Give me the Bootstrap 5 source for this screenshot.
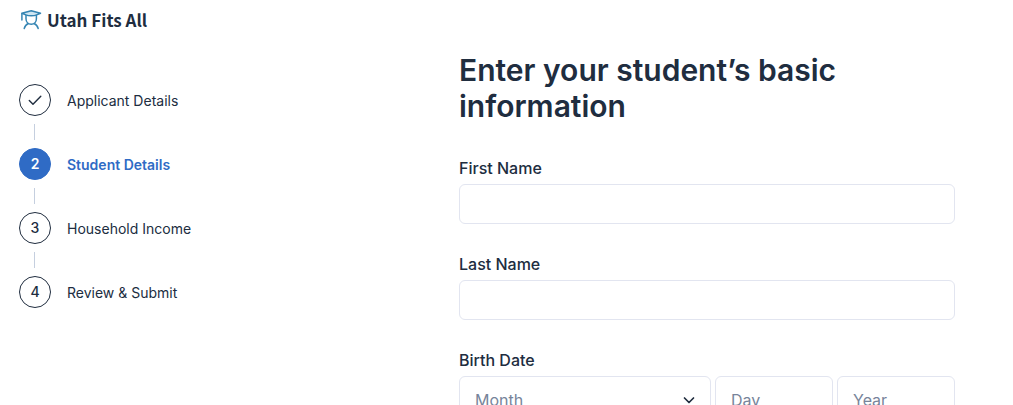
<!DOCTYPE html>
<html lang="en">
<head>
<meta charset="utf-8">
<meta name="viewport" content="width=device-width, initial-scale=1">
<title>Utah Fits All – Student Details</title>
<link href="https://cdn.jsdelivr.net/npm/bootstrap@5.3.0/dist/css/bootstrap.min.css" rel="stylesheet">
<style>
  :root { --ink: #202d3f; --brand: #2f6bc5; --line: #e2e5f0; --hint: #77849a; }
  body { font-family: Inter, "Liberation Sans", sans-serif; color: var(--ink); background: #fff; }
  .sidebar { width: 401px; padding: 8px 19px; }
  .brand { font-family: "Noto Sans CJK SC", sans-serif; font-size: 17px; font-weight: 700; line-height: 24px; color: var(--ink); gap: 4px; }
  .steps { margin-top: 52px; }
  .step { height: 64px; font-size: 14px; }
  .step a { color: inherit; height: 32px; line-height: 32px; gap: 16px; }
  .step:not(:last-child)::after { content: ""; display: block; width: 1px; height: 16px; margin: 8px 15px; background: #c5cfdf; }
  .step-dot { width: 32px; height: 32px; border: 1px solid var(--ink); font-weight: 500; }
  .step-label { padding-top: 1px; }
  .step.active { color: var(--brand); font-weight: 600; }
  .step.active .step-dot { background: var(--brand); border-color: var(--brand); color: #fff; font-weight: 600; }
  .student-form { max-width: 496px; padding-top: 52px; }
  .student-form h1 { font-size: 30px; font-weight: 600; line-height: 36px; margin-bottom: 32px; }
  .field { margin-bottom: 28px; }
  .field-label { display: block; font-size: 16px; font-weight: 500; line-height: 24px; margin-bottom: 4px; }
  .form-control, .form-select { height: 40px; border-color: var(--line); border-radius: 6px; padding: 8px 15px; font-size: 16px; line-height: 24px; color: var(--ink); }
  .form-control::placeholder, .form-select { color: var(--hint); }
  .form-select { background-image: url("data:image/svg+xml,%3csvg xmlns='http://www.w3.org/2000/svg' viewBox='0 0 12 12'%3e%3cpath fill='none' stroke='%23202d3f' stroke-width='1.7' stroke-linecap='round' stroke-linejoin='round' d='M1.5 4 6 8.500 10.500 4'/%3e%3c/svg%3e"); background-size: 12px 12px; background-position: right 15px center; }
  .birth { display: grid; grid-template-columns: 252fr 118fr 118fr; gap: 4px; }
  .birth > * { height: 48px; }
</style>
</head>
<body>
<div class="d-flex">
  <aside class="sidebar flex-shrink-0">
    <a href="#" class="brand d-flex align-items-center text-decoration-none">
      <svg width="24" height="24" viewBox="0 0 24 24" fill="none" stroke="#3585b3" stroke-width="1.5" stroke-linecap="round" stroke-linejoin="round" aria-hidden="true">
        <path d="M2.900 5.500v6.500M7 7.300v3.500c0 3.300 2.300 5.500 5.200 5.500s5.200-2.200 5.200-5.500V7.300M5.200 20.500c.8-2.700 2.200-4.200 4.200-5M19.200 20.500c-.8-2.700-2.200-4.200-4.200-5"/>
        <path fill="#cfe6f2" d="M2.900 5.300 12.200 2.800l9.300 2.500-4.500 1.800c-1.500.9-8 .9-9.500 0z"/>
      </svg>
      <span>Utah Fits All</span>
    </a>
    <nav aria-label="Application steps">
      <ol class="steps list-unstyled mb-0">
        <li class="step"><a href="#" class="d-flex text-decoration-none">
          <span class="step-dot rounded-circle d-flex align-items-center justify-content-center"><svg width="16" height="16" viewBox="0 0 16 16" fill="none" stroke="currentColor" stroke-width="1.4" stroke-linecap="round" stroke-linejoin="round" role="img" aria-label="Completed"><path d="m2.300 8.500 3.700 3.800 7.800-8"/></svg></span>
          <span class="step-label">Applicant Details</span></a></li>
        <li class="step active"><a href="#" class="d-flex text-decoration-none" aria-current="step">
          <span class="step-dot rounded-circle d-flex align-items-center justify-content-center">2</span>
          <span class="step-label">Student Details</span></a></li>
        <li class="step"><a href="#" class="d-flex text-decoration-none">
          <span class="step-dot rounded-circle d-flex align-items-center justify-content-center">3</span>
          <span class="step-label">Household Income</span></a></li>
        <li class="step"><a href="#" class="d-flex text-decoration-none">
          <span class="step-dot rounded-circle d-flex align-items-center justify-content-center">4</span>
          <span class="step-label">Review &amp; Submit</span></a></li>
      </ol>
    </nav>
  </aside>
  <main class="flex-grow-1">
    <form class="student-form mx-auto">
      <h1>Enter your student’s basic information</h1>
      <div class="field">
        <label class="field-label" for="first">First Name</label>
        <input class="form-control" id="first" type="text">
      </div>
      <div class="field">
        <label class="field-label" for="last">Last Name</label>
        <input class="form-control" id="last" type="text">
      </div>
      <div>
        <label class="field-label" for="month">Birth Date</label>
        <div class="birth">
          <select class="form-select" id="month"><option>Month</option></select>
          <input class="form-control" type="text" placeholder="Day" aria-label="Day">
          <input class="form-control" type="text" placeholder="Year" aria-label="Year">
        </div>
      </div>
    </form>
  </main>
</div>
<script src="https://cdn.jsdelivr.net/npm/bootstrap@5.3.0/dist/js/bootstrap.bundle.min.js"></script>
</body>
</html>
